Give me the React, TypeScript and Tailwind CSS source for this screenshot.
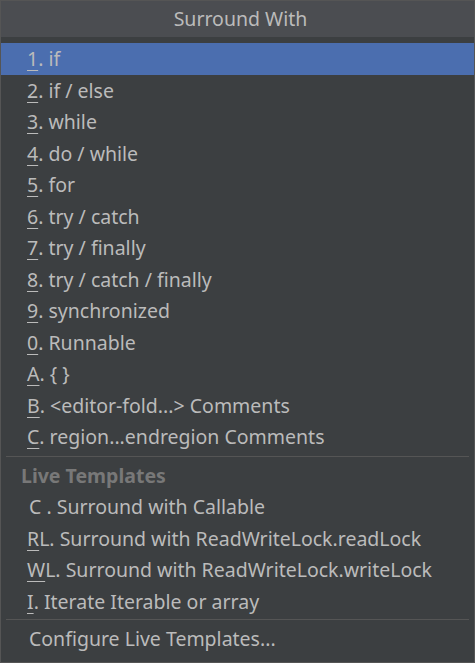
import React from "react";

const items: { m: string; rest: string }[] = [
  { m: "1", rest: ". if" },
  { m: "2", rest: ". if / else" },
  { m: "3", rest: ". while" },
  { m: "4", rest: ". do / while" },
  { m: "5", rest: ". for" },
  { m: "6", rest: ". try / catch" },
  { m: "7", rest: ". try / finally" },
  { m: "8", rest: ". try / catch / finally" },
  { m: "9", rest: ". synchronized" },
  { m: "0", rest: ". Runnable" },
  { m: "A", rest: ". { }" },
  { m: "B", rest: ". <editor-fold...> Comments" },
  { m: "C", rest: ". region...endregion Comments" },
];

const live: { m: string; rest: string; pad?: boolean }[] = [
  { m: "", rest: "C . Surround with Callable", pad: true },
  { m: "R", rest: "L. Surround with ReadWriteLock.readLock" },
  { m: "W", rest: "L. Surround with ReadWriteLock.writeLock" },
  { m: "I", rest: ". Iterate Iterable or array" },
];

export default function App() {
  return (
    <div
      className="w-[475px] h-[663px] border border-[#555555] bg-[#3c3f41] flex flex-col text-[#bbbbbb] text-[19.5px] overflow-hidden"
      style={{ fontFamily: '"Noto Sans", "Open Sans", sans-serif' }}
    >
      <div className="h-[36px] shrink-0 bg-[#4b4d51] flex items-center justify-center pl-[6px]">
        Surround With
      </div>
      <div className="h-[6px] shrink-0" />
      {items.map((it, i) => (
        <div
          key={i}
          className={`h-[31.5px] shrink-0 flex items-center pl-[26px] ${i === 0 ? "bg-[#4b6eaf]" : ""}`}
        >
          <span className="underline underline-offset-[4px] decoration-1">{it.m}</span>
          <span className="whitespace-pre">{it.rest}</span>
        </div>
      ))}
      <div className="mt-[3px] mx-[5px] h-px bg-[#555555] shrink-0" />
      <div className="h-[3px] shrink-0" />
      <div className="h-[31.5px] shrink-0 flex items-center pl-[20px] font-bold text-[#787878]">
        Live Templates
      </div>
      {live.map((it, i) => (
        <div key={i} className={`h-[31.5px] shrink-0 flex items-center ${it.pad ? "pl-[28px]" : "pl-[26px]"}`}>
          {it.m && <span className="underline underline-offset-[4px] decoration-1">{it.m}</span>}
          <span className="whitespace-pre">{it.rest}</span>
        </div>
      ))}
      <div className="mt-[2px] mx-[5px] h-px bg-[#555555] shrink-0" />
      <div className="h-[38px] shrink-0 flex items-center pl-[28px]">Configure Live Templates...</div>
    </div>
  );
}
